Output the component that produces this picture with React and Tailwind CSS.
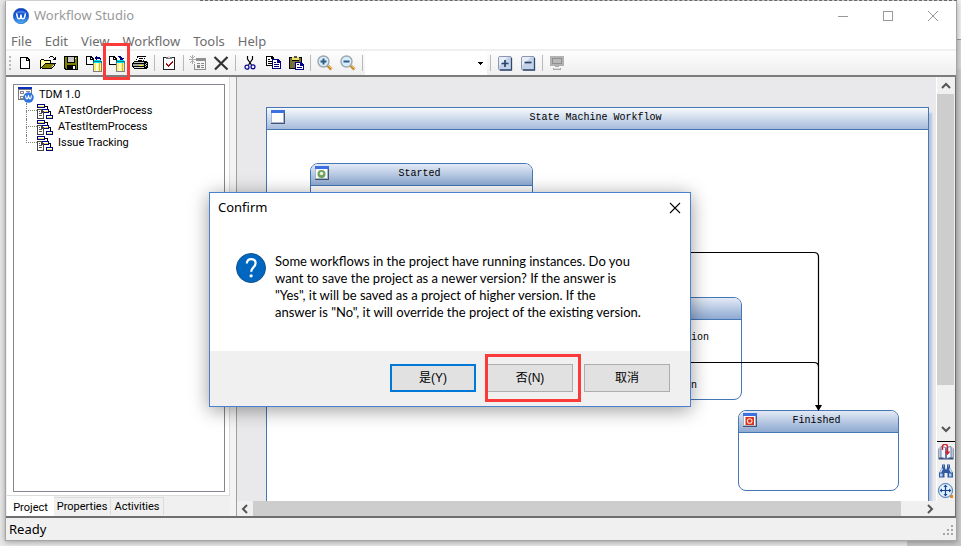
import React from "react";

function Icon({ children, size = "h-4 w-4", smooth = false }) {
  return (
    <svg viewBox="0 0 16 16" className={`${size} shrink-0`} shapeRendering={smooth ? "auto" : "crispEdges"} aria-hidden="true">
      {children}
    </svg>
  );
}

function LogoIcon() {
  return (
    <svg viewBox="0 0 16 16" className="h-4 w-4 shrink-0" aria-hidden="true">
      <defs>
        <linearGradient id="logo" x1="0" y1="0" x2="0" y2="1">
          <stop offset="0" stopColor="#0a3fc0" />
          <stop offset="0.5" stopColor="#1458d6" />
          <stop offset="1" stopColor="#4fb4f6" />
        </linearGradient>
      </defs>
      <circle cx="8" cy="8" r="7.7" fill="url(#logo)" stroke="#1b4fb0" strokeWidth="0.6" />
      <path d="M2.4 5.2a6.200 4.600 0 0 1 11.200 0" fill="#6b9cf0" opacity="0.6" />
      <path d="M3.500 5.300l1 4.200q.4 1.200 1.500 1.200h.4q1 0 1.200-1L8 6.500l.4 3.200q.2 1 1.200 1h.4q1.100 0 1.500-1.200l1-4.200" fill="none" stroke="#fff" strokeWidth="1.500" />
    </svg>
  );
}

function NewIcon() {
  return (
    <Icon>
      <path d="M3 2h7l3 3v9H3z" fill="#000" />
      <path d="M4 3h5v3h3v7H4z" fill="#fff" />
      <path d="M10 4h1v1h-1z" fill="#fff" />
    </Icon>
  );
}

function OpenIcon() {
  return (
    <Icon>
      <path d="M0 5h1v9H0zM1 4h3v1H1zM4 5h7v1H4zM10 6h1v2h-1zM5 8h11v1H5zM4 9h1v1H4zM3 10h1v1H3zM2 11h1v1H2zM1 12h1v2H1zM1 14h11v-1H1zM12 12h1v1h-1zM13 11h1v1h-1zM14 9h1v2h-1z" fill="#000" />
      <path d="M1 5h3v1h6v2H5v1H4v1H3v1H2v1H1z" fill="#ffff9c" />
      <path d="M5 9h9v1h-1v1h-1v2H2v-1h1v-1h1v-1h1z" fill="#808000" />
      <path d="M9 2h1V1h3v1h1v1h1V2h1v3h-3V4h1V3h-1V2h-3v1H9z" fill="#000" />
    </Icon>
  );
}

function SaveIcon() {
  return (
    <Icon>
      <path d="M1 1h14v14H2l-1-1z" fill="#000" />
      <path d="M2 2h12v12H3l-1-1z" fill="#808000" />
      <path d="M4 1h8v7H4z" fill="#000" />
      <path d="M5 2h6v5H5z" fill="#c9c9c9" />
      <path d="M4 10h9v5H4z" fill="#000" />
      <path d="M10 11h2v3h-2z" fill="#fff" />
      <path d="M12 3h1v1h-1z" fill="#fff" />
    </Icon>
  );
}

function DatabaseIcon({ out = false }) {
  return (
    <svg viewBox="0 0 18 17" className="h-[17px] w-[18px] shrink-0" shapeRendering="crispEdges" aria-hidden="true">
      <path d="M1 1h5l3 3v6H1z" fill="#000" />
      <path d="M2 2h3v3h3v4H2zM6 3h1v1H6z" fill="#fff" />
      {out ? (
        <path d="M10 1h3v1h1v1h2v1h-1v1h-1v1h-1V5h-1V3h-1V2h-1z" fill="#000080" />
      ) : (
        <path d="M9 3h1V2h1V1h1v1h3v1h1v2h-1V4h-3v1h-1V4h-1z" fill="#000080" />
      )}
      <path d="M8 6h9v11H8z" fill="#808080" />
      <path d="M9 6h7v10H9z" fill="#fff36b" />
      <path d="M11 8h2v8h-2z" fill="#fffde0" />
      <path d="M14 8h1v8h-1z" fill="#c8c040" />
      <path d="M8 6h9v2H8z" fill="#008080" />
      <path d="M9 5h7v1H9zM9 7h7v1H9z" fill="#00e5ff" />
    </svg>
  );
}

function PrintIcon() {
  return (
    <Icon>
      <path d="M5 1h9v1h-1v2h-1v2H4V4h1z" fill="#000" />
      <path d="M6 2h7L11 6H4z" fill="#fff" />
      <path d="M7 3h4v1H7zM6 5h4v1H6z" fill="#000" />
      <path d="M2 6h12l2 1v5l-2 2H2l-2-2V8z" fill="#000" />
      <path d="M2 7h10v1H2z" fill="#c0c0c0" />
      <path d="M1 9h11v2H1z" fill="#a4a4a4" />
      <path d="M7 10h4v1H7z" fill="#ffff00" />
      <path d="M2 12h10v1H2z" fill="#d8d8d8" />
      <path d="M14 8h1v1h-1zM13 9h1v1h-1zM14 10h1v1h-1zM13 11h1v1h-1z" fill="#d0d0d0" />
    </Icon>
  );
}

function CheckIcon() {
  return (
    <Icon>
      <path d="M2 2h12v13H2z" fill="#222" />
      <path d="M3 3h10v11H3z" fill="#fff" />
      <path d="M5 2h6v2H5z" fill="#777" />
      <path d="M7 1h2v2H7z" fill="#ddd" />
      <path d="M5 8h1v1h1v1h1V9h1V8h1V7h1V6h1v2h-1v1h-1v1H9v1H8v1H7v-1H6v-1H5z" fill="#a01010" />
    </Icon>
  );
}

function FormIcon() {
  return (
    <svg viewBox="0 0 18 16" className="h-4 w-[18px] shrink-0" shapeRendering="crispEdges" aria-hidden="true">
      <path d="M7 3h10v12H5V9h1v5h10V6H7z" fill="#909090" />
      <path d="M8 8h3v1H8zM8 10h3v3H8zM12 8h3v1h-3zM12 10h3v1h-3zM12 12h3v1h-3z" fill="#8a8a8a" />
      <path d="M3 0h1v9H3zM0 4h7v1H0zM1 1h1v1H1zM5 1h1v1H5zM1 7h1v1H1zM5 7h1v1H5zM2 2h1v1H2zM4 2h1v1H4zM2 6h1v1H2zM4 6h1v1H4z" fill="#aaa" />
    </svg>
  );
}

function DeleteIcon() {
  return (
    <Icon smooth>
      <path d="M1.500 2l13 12.500M14.500 2L2 14.500" stroke="#333" strokeWidth="2.200" fill="none" />
    </Icon>
  );
}

function CutIcon() {
  return (
    <Icon smooth>
      <path d="M5.500 1v3l4 6M10.500 1v3l-4 6" stroke="#000" strokeWidth="1.200" fill="none" />
      <circle cx="5" cy="12.200" r="2" fill="none" stroke="#000090" strokeWidth="1.200" />
      <circle cx="11" cy="11.800" r="2" fill="none" stroke="#000090" strokeWidth="1.200" />
    </Icon>
  );
}

function CopyIcon() {
  return (
    <Icon>
      <path d="M1 1h6l2 2v8H1z" fill="#000" />
      <path d="M2 2h4v2h2v6H2z" fill="#fff" />
      <path d="M3 4h2v1H3zM3 6h4v1H3zM3 8h4v1H3z" fill="#000" />
      <path d="M7 4h6l3 3v7H7z" fill="#000080" />
      <path d="M8 5h4v3h3v5H8z" fill="#fff" />
      <path d="M9 7h2v1H9zM9 9h5v1H9zM9 11h5v1H9z" fill="#000080" />
    </Icon>
  );
}

function PasteIcon() {
  return (
    <Icon>
      <path d="M1 2h13v12H1z" fill="#000" />
      <path d="M2 3h11v10H2z" fill="#77703a" />
      <path d="M4 2h7v3H4z" fill="#e8e060" />
      <path d="M6 1h3v2H6z" fill="#555" />
      <path d="M4 5h7v1H4z" fill="#000" />
      <path d="M7 7h6l3 3v5H7z" fill="#000080" />
      <path d="M8 8h4v3h3v3H8z" fill="#fff" />
      <path d="M9 9h2v1H9zM9 12h5v1H9z" fill="#000080" />
    </Icon>
  );
}

function ZoomIcon({ plus = false }) {
  return (
    <Icon smooth>
      <path d="M10.500 10.500l4 3.800" stroke="#c98a2b" strokeWidth="3" />
      <path d="M11 10l4 3.800" stroke="#f2cf7a" strokeWidth="1" />
      <circle cx="6.500" cy="6.500" r="5.500" fill="#d9ecfa" stroke="#9aa6b2" strokeWidth="1.400" />
      <path d={plus ? "M3.500 6.500h6M6.500 3.500v6" : "M3.500 6.500h6"} stroke="#2c5c86" strokeWidth="2" />
    </Icon>
  );
}

function SquareIcon({ plus = false }) {
  return (
    <Icon smooth>
      <rect x="1.500" y="1.500" width="13" height="13.500" rx="1.500" fill="#c4d2ea" stroke="#8a97ae" />
      <path d="M2 2h9l-9 9z" fill="#fff" opacity="0.6" />
      <path d="M3 15h11.500V3" fill="none" stroke="#33486e" strokeWidth="1.300" />
      <path d={plus ? "M4.500 8.500h7M8 5v7" : "M4.500 7.500h7"} stroke="#2b4468" strokeWidth="1.700" />
    </Icon>
  );
}

function MonitorIcon() {
  return (
    <Icon>
      <path d="M1 1h14v10H1z" fill="#b2b2b2" />
      <path d="M3 3h10v6H3z" fill="#8f8f8f" />
      <path d="M4 4h8v4H4z" fill="#b9b9b9" />
      <path d="M6 11h4v1H6zM4 13h8v2H4z" fill="#a8a8a8" />
      <path d="M5 13h6v1H5z" fill="#ddd" />
    </Icon>
  );
}

function ProjectIcon() {
  return (
    <Icon>
      <path d="M0 0h14v13H0z" fill="#777" />
      <path d="M1 3h12v9H1z" fill="#fff" />
      <path d="M0 0h14v2H0z" fill="#0a2fc0" />
      <path d="M2 4h4v3H2zM8 4h4v1H8zM8 6h4v1H8zM2 9h4v3H2z" fill="#888" />
      <path d="M3 5h2v1H3zM3 10h2v1H3z" fill="#fff" />
      <g shapeRendering="auto">
        <circle cx="10.500" cy="10.500" r="5.200" fill="#2e74e0" />
        <path d="M7.500 8.500l.8 3.300h1.200l1-2.800 1 2.800h1.200l.8-3.300" fill="none" stroke="#fff" strokeWidth="1.100" />
      </g>
    </Icon>
  );
}

function ProcessIcon() {
  return (
    <svg viewBox="0 0 16 15" className="h-[15px] w-4 shrink-0" shapeRendering="crispEdges" aria-hidden="true">
      <path d="M0 0h8v4H0zM4 5h8v4H4zM9 11h7v4H9z" fill="#000080" />
      <path d="M1 1h6v1H1zM5 6h6v1H5zM10 12h5v1h-5z" fill="#fff" />
      <path d="M1 2h6v1H1zM5 7h6v1H5zM10 13h5v1h-5z" fill="#e6df60" />
      <path d="M8 2h3v3h-1V3H8zM12 7h2v4h-1V8h-1z" fill="#000" />
      <path d="M0 5h4l3 3v7H0z" fill="#444" />
      <path d="M1 6h3v3h2v5H1z" fill="#fff" />
      <path d="M2 7h1v1H2zM2 9h3v1H2zM2 11h3v1H2z" fill="#555" />
    </svg>
  );
}

function WindowIcon({ kind }) {
  return (
    <svg viewBox="0 0 14 14" className="absolute left-1 top-[2px] h-[14px] w-[14px]" aria-hidden="true">
      <path d="M0 0h14v14H0z" fill="#44536f" />
      <path d="M0 0h13v13H0z" fill="#a9b6cf" />
      <path d="M1 3h11v9H1z" fill="#fdfdff" />
      <path d="M0 0h14v3H0z" fill="#3a70e0" />
      {kind === "start" && (
        <g>
          <circle cx="6.500" cy="8" r="4" fill="#6fa35b" />
          <circle cx="6.500" cy="7.500" r="1.800" fill="#e9f2df" />
        </g>
      )}
      {kind === "end" && (
        <g>
          <path d="M2.500 4h8.500v8H2.500z" fill="#d8321c" />
          <circle cx="6.700" cy="8" r="2.300" fill="none" stroke="#ffd9c8" strokeWidth="1.100" />
        </g>
      )}
    </svg>
  );
}

function BookIcon() {
  return (
    <Icon smooth>
      <path d="M.5 4.500h15v11H.5z" fill="#3b4f77" />
      <path d="M1 3.500h2v10H1zM13 3.500h2v10h-2z" fill="#b9c7df" />
      <path d="M3 2.500l4.500 1v11l-4.500-1zM13 2.500l-4.500 1v11l4.500-1z" fill="#f3f6fc" stroke="#5a6d95" strokeWidth=".8" />
      <path d="M4.500 6V3a2.500 2.500 0 0 1 5-.5V9M7.500 7.500l2 2.500 2-2.500" fill="none" stroke="#d3222a" strokeWidth="1.400" />
    </Icon>
  );
}

function BinocularsIcon() {
  return (
    <Icon smooth>
      <path d="M4 1.500h3v3l.5 2h1l.5-2v-3h3v3l3 5.500v4.500H9.500V10h-3v4.500H1V10l3-5.500z" fill="#2f5aa0" />
      <path d="M4.500 5.500l-2 4M11.500 5.500l2 4" stroke="#dce9fb" strokeWidth="1.400" />
      <path d="M2 10.500h2.500v3H2zM11 10.500h2.500v3H11z" fill="#b4cbee" />
      <path d="M5 3h1M10 3h1" stroke="#c7daf6" />
    </Icon>
  );
}

function PanIcon() {
  return (
    <Icon smooth>
      <circle cx="7.500" cy="7.500" r="7" fill="#e1eefb" stroke="#3f72b5" strokeWidth="1" />
      <path d="M7.500 3v9M3 7.500h9" stroke="#16478f" strokeWidth="1.200" />
      <path d="M7.500 1.500l2 2.500h-4zM7.500 13.500l2-2.500h-4zM1.500 7.500L4 5.500v4zM13.500 7.500L11 5.500v4z" fill="#16478f" />
      <path d="M12 12h3v3h-3z" fill="#e58a2a" />
    </Icon>
  );
}

function Chevron({ d }) {
  return (
    <svg viewBox="0 0 10 10" className="h-[10px] w-[10px]" fill="none" stroke="#555" strokeWidth="2" aria-hidden="true">
      <path d={d} />
    </svg>
  );
}

function Separator() {
  return (
    <div className="flex w-[6px] shrink-0 justify-center">
      <div className="h-4 w-px bg-[#b9b9b9]" />
    </div>
  );
}

function ToolButton({ label, children, highlighted = false }) {
  return (
    <button type="button" aria-label={label} className="relative flex h-6 w-[23px] shrink-0 items-center justify-center">
      {children}
      {highlighted && <span className="absolute -left-[2px] -top-2 z-10 h-[37px] w-[27px] border-[3px] border-[#fb3a39]" />}
    </button>
  );
}

function Toolbar() {
  return (
    <div className="flex h-[26px] shrink-0 items-center border-b-2 border-[#7c7c7c] bg-gradient-to-b from-[#fdfdfd] to-[#efefef]">
      <div className="flex w-[7px] shrink-0 flex-col items-center gap-[2px]">
        <i className="h-[2px] w-[2px] bg-[#b8b8b8]" />
        <i className="h-[2px] w-[2px] bg-[#b8b8b8]" />
        <i className="h-[2px] w-[2px] bg-[#b8b8b8]" />
        <i className="h-[2px] w-[2px] bg-[#b8b8b8]" />
      </div>
      <ToolButton label="New"><NewIcon /></ToolButton>
      <ToolButton label="Open"><OpenIcon /></ToolButton>
      <ToolButton label="Save"><SaveIcon /></ToolButton>
      <ToolButton label="Open from database"><DatabaseIcon /></ToolButton>
      <ToolButton label="Save to database" highlighted><DatabaseIcon out /></ToolButton>
      <ToolButton label="Print"><PrintIcon /></ToolButton>
      <Separator />
      <ToolButton label="Validate"><CheckIcon /></ToolButton>
      <Separator />
      <ToolButton label="New form"><FormIcon /></ToolButton>
      <ToolButton label="Delete"><DeleteIcon /></ToolButton>
      <Separator />
      <ToolButton label="Cut"><CutIcon /></ToolButton>
      <ToolButton label="Copy"><CopyIcon /></ToolButton>
      <ToolButton label="Paste"><PasteIcon /></ToolButton>
      <Separator />
      <ToolButton label="Zoom in"><ZoomIcon plus /></ToolButton>
      <ToolButton label="Zoom out"><ZoomIcon /></ToolButton>
      <Separator />
      <div className="relative h-6 w-[122px] shrink-0">
        <select aria-label="Zoom level" className="h-6 w-full appearance-none bg-white outline-none">
          <option value="" />
        </select>
        <svg viewBox="0 0 5 3" className="pointer-events-none absolute right-1 top-[11px] h-[3px] w-[5px]" shapeRendering="crispEdges" aria-hidden="true">
          <path d="M0 0h5v1H4v1H3v1H2V2H1V1H0z" />
        </svg>
      </div>
      <Separator />
      <ToolButton label="Expand"><SquareIcon plus /></ToolButton>
      <ToolButton label="Collapse"><SquareIcon /></ToolButton>
      <Separator />
      <ToolButton label="Monitor"><MonitorIcon /></ToolButton>
    </div>
  );
}

function ProjectPanel() {
  return (
    <aside className="flex w-[224px] shrink-0 flex-col bg-[#f0f0f0] pl-px font-['Roboto','Liberation_Sans',sans-serif] text-[11px] text-black">
      <div className="flex flex-1 border-b border-r border-[#dcdcdc] bg-white pb-[3px] pl-[6px] pr-1 pt-[7px]">
        <div className="flex-1 border border-[#828790] px-1 pt-[2px]">
          <div className="flex h-4 items-center gap-[5px]">
            <ProjectIcon />
            <span>TDM 1.0</span>
          </div>
          <ul className="ml-2">
            {["ATestOrderProcess", "ATestItemProcess", "Issue Tracking"].map((name, i) => (
              <li key={name} className="flex h-4 items-center">
                <span className="flex h-4 w-[11px] flex-col">
                  <span className="h-2 border-b border-l border-dotted border-[#808080]" />
                  <span className={i < 2 ? "h-2 border-l border-dotted border-[#808080]" : "h-2"} />
                </span>
                <ProcessIcon />
                <span className="ml-[5px]">{name}</span>
              </li>
            ))}
          </ul>
        </div>
      </div>
      <div role="tablist" className="flex h-5 shrink-0 items-start">
        <button type="button" role="tab" aria-selected="true" className="h-5 w-[47px] bg-white pt-[3px] leading-4">Project</button>
        <button type="button" role="tab" aria-selected="false" className="mt-px h-[18px] w-[57px] border-r border-t border-[#dcdcdc] leading-4">Properties</button>
        <button type="button" role="tab" aria-selected="false" className="mt-px h-[18px] w-[53px] border-r border-t border-[#dcdcdc] leading-4">Activities</button>
      </div>
    </aside>
  );
}

function StateCard({ title, kind, place, children }) {
  return (
    <section className={`absolute overflow-hidden rounded-lg border border-[#4576b5] bg-white ${place}`}>
      <header className="relative h-[22px] border-b border-[#4576b5] bg-gradient-to-b from-[#e3eaf5] to-[#8ea9d1] pr-1 text-center leading-5">
        {title && <WindowIcon kind={kind} />}
        {title}
      </header>
      {children}
    </section>
  );
}

function Designer() {
  return (
    <div className="flex min-w-0 flex-1 overflow-hidden bg-[#e9e9eb] pl-[29px] pr-[7px] pt-[30px] font-['Liberation_Mono','Courier_New',monospace] text-[10px] text-black">
      <section className="flex flex-1 flex-col border border-b-0 border-[#4576b5] bg-white shadow-[3px_6px_2px_#b8c4dc]">
        <header className="relative h-[22px] shrink-0 border-b border-[#4576b5] bg-gradient-to-b from-[#f8fafd] to-[#a6bcdc] pr-1 text-center leading-5">
          <WindowIcon />
          State Machine Workflow
        </header>
        <div className="relative flex-1">
          <StateCard title="Started" kind="start" place="left-[43px] top-[33px] h-[100px] w-[223px]" />
          <StateCard place="left-[288px] top-[167px] h-[103px] w-[187px]">
            <p className="pl-[135px] pt-[10px] leading-4">ion</p>
            <p className="pl-[135px] pt-8 leading-4">n</p>
          </StateCard>
          <StateCard title="Finished" kind="end" place="left-[471px] top-[280px] h-[81px] w-[161px]" />
          <svg viewBox="0 0 661 370" className="absolute left-0 top-0 h-[370px] w-[661px]" aria-hidden="true">
            <path d="M420 122.500H547q4.500 0 4.500 4.500V277M420 232.500H547q4.500 0 4.500 4.500" fill="none" stroke="#000" strokeWidth="1.200" />
            <path d="M548 275h7l-3.500 6z" fill="#000" />
          </svg>
        </div>
      </section>
    </div>
  );
}

function SideColumn() {
  return (
    <div className="flex w-[19px] shrink-0 flex-col border-l border-white bg-[#f0f0f0]">
      <div className="flex flex-1 flex-col">
        <button type="button" aria-label="Scroll up" className="flex h-[17px] items-center justify-center"><Chevron d="M1 7l4-4 4 4" /></button>
        <div className="mr-px flex-[291] bg-[#cdcdcd]" />
        <div className="flex-[37]" />
        <button type="button" aria-label="Scroll down" className="flex h-[14px] items-center justify-center"><Chevron d="M1 3l4 4 4-4" /></button>
        <div className="h-[6px] border-b border-black" />
      </div>
      <div className="flex h-[59px] flex-col items-center justify-around">
        <button type="button" aria-label="Overview"><BookIcon /></button>
        <button type="button" aria-label="Find"><BinocularsIcon /></button>
        <button type="button" aria-label="Pan"><PanIcon /></button>
      </div>
    </div>
  );
}

function ConfirmDialog() {
  const button = "block h-7 w-[86px] bg-[#e1e1e1] font-['Liberation_Sans','Noto_Sans_CJK_SC',sans-serif] text-xs";
  return (
    <div role="dialog" aria-labelledby="confirm-title" className="absolute left-[209px] top-[192px] w-[482px] border border-[#4a81cf] bg-white text-black shadow-[0_3px_18px_rgba(0,0,0,0.4)]">
      <div className="flex h-[30px] items-center justify-between pl-2 pr-[9px]">
        <h2 id="confirm-title" className="text-[13px]">Confirm</h2>
        <button type="button" aria-label="Close" className="flex">
          <svg viewBox="0 0 12 12" className="h-3 w-3" stroke="#000" strokeWidth="1.100" aria-hidden="true"><path d="M1 1l10 10M11 1L1 11" /></svg>
        </button>
      </div>
      <div className="flex h-32 gap-[9px] pl-[26px] pt-[30px]">
        <svg viewBox="0 0 30 30" className="h-[30px] w-[30px] shrink-0" aria-hidden="true">
          <circle cx="15" cy="15" r="14.500" fill="#0067c0" stroke="#14508a" />
          <path d="M10.800 10.500c.3-3 2-4.300 4.400-4.300 2.600 0 4.400 1.500 4.400 4 0 4.100-4.400 4.200-4.400 8.600" fill="none" stroke="#fff" strokeWidth="2.200" />
          <circle cx="15.100" cy="22.800" r="1.600" fill="#fff" />
        </svg>
        <p className="whitespace-nowrap font-['Lato','Noto_Sans',sans-serif] text-[13px] leading-[17px]">
          Some workflows in the project have running instances. Do you<br />
          want to save the project as a newer version? If the answer is<br />
          "Yes", it will be saved as a project of higher version. If the<br />
          answer is "No", it will override the project of the existing version.
        </p>
      </div>
      <div className="flex h-[55px] items-center justify-end gap-[11px] bg-[#f0f0f0] pb-[2px] pr-5">
        <button type="button" className={`${button} border-2 border-[#0078d7]`}>是(Y)</button>
        <div className="relative">
          <button type="button" className={`${button} border border-[#adadad]`}>否(N)</button>
          <span className="pointer-events-none absolute -left-[2px] -top-[10px] h-12 w-24 border-[3px] border-[#fb3a39]" />
        </div>
        <button type="button" className={`${button} border border-[#adadad]`}>取消</button>
      </div>
    </div>
  );
}

export default function App() {
  return (
    <div className="relative flex min-h-screen flex-col overflow-hidden bg-[#e9e9e9] pb-[5px] pl-[5px] pr-1 pt-px font-['Noto_Sans','Noto_Sans_CJK_SC',sans-serif] text-[13px]">
      <div className="absolute left-[200px] right-1 top-0 border-t border-dashed border-[#777]" />
      <div className="absolute right-0 top-0 h-10 w-1 border-b border-[#999] bg-[#f2f2f2]" />
      <div className="absolute right-0 top-10 h-[29px] w-1 bg-[#dadada]" />
      <div className="absolute bottom-0 right-0 top-[69px] w-1 bg-[#cfcfcf]" />
      <div className="absolute bottom-0 right-0 h-[6px] w-[54px] bg-[#c8c8c8]" />
      <main className="relative flex flex-1 flex-col border border-t-0 border-[#a5a5a5] bg-white shadow-[0_1px_6px_rgba(0,0,0,0.35)]">
        <div className="flex h-[30px] shrink-0 items-center pl-[7px] pr-px">
          <LogoIcon />
          <h1 className="ml-[5px] flex-1 text-[13px] text-[#999]">Workflow Studio</h1>
          <button type="button" aria-label="Minimize" className="flex h-full w-[45px] items-center justify-center">
            <span className="h-px w-[10px] bg-[#999]" />
          </button>
          <button type="button" aria-label="Maximize" className="flex h-full w-[45px] items-center justify-center">
            <span className="h-[10px] w-[10px] border border-[#999]" />
          </button>
          <button type="button" aria-label="Close window" className="flex h-full w-[45px] items-center justify-center">
            <svg viewBox="0 0 12 12" className="h-3 w-3" stroke="#999" aria-hidden="true"><path d="M1 1l10 10M11 1L1 11" /></svg>
          </button>
        </div>
        <nav className="flex h-5 shrink-0 items-center gap-[13px] border-b-2 border-[#f0f0f0] pl-[5px] pt-[2px] leading-4 text-[#6d6d6d]">
          {["File", "Edit", "View", "Workflow", "Tools", "Help"].map((item) => (
            <button key={item} type="button">{item}</button>
          ))}
        </nav>
        <Toolbar />
        <div className="flex flex-1 border-b-2 border-r border-b-[#6e6e6e] border-r-[#6e6e6e]">
          <ProjectPanel />
          <div className="w-[7px] shrink-0 border-r border-[#a0a0a0] bg-[#f3f3f3]" />
          <div className="flex min-w-0 flex-1 flex-col">
            <div className="flex flex-1">
              <Designer />
              <SideColumn />
            </div>
            <div className="flex h-[15px] shrink-0 bg-[#f0f0f0]">
              <button type="button" aria-label="Scroll left" className="flex w-4 items-center justify-center"><Chevron d="M7 1L3 5l4 4" /></button>
              <div className="flex-1 bg-[#cdcdcd]" />
              <button type="button" aria-label="Scroll right" className="mr-[18px] flex w-9 items-center justify-end pr-[2px]"><Chevron d="M3 1l4 4-4 4" /></button>
            </div>
          </div>
        </div>
        <footer className="flex h-[22px] shrink-0 items-center justify-between bg-[#f0f0f0] pl-[3px] pr-[2px] pt-[2px] text-black">
          <span>Ready</span>
          <svg viewBox="0 0 12 12" className="h-3 w-3" fill="#a8a8a8" shapeRendering="crispEdges" aria-hidden="true">
            <path d="M9 1h2v2H9zM5 5h2v2H5zM9 5h2v2H9zM1 9h2v2H1zM5 9h2v2H5zM9 9h2v2H9z" />
          </svg>
        </footer>
      </main>
      <ConfirmDialog />
    </div>
  );
}
